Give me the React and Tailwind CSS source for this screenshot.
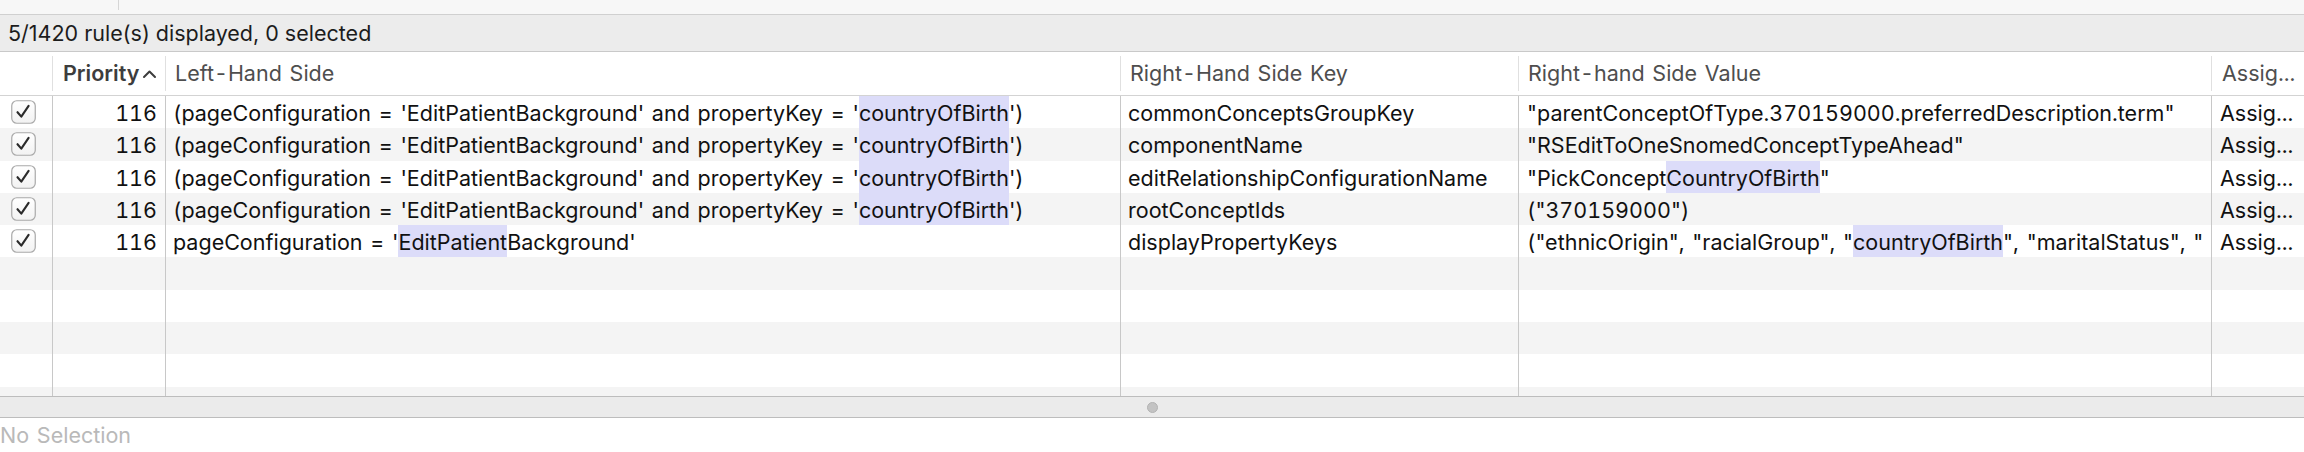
import React from "react";

const font = { fontFamily: 'Inter, "Liberation Sans", Arial, sans-serif' };

// column widths, left to right
const cols = ["w-[53px]", "w-[113px]", "w-[955px]", "w-[398px]", "w-[693px]", "flex-1"];

const lhs = ["(pageConfiguration = 'EditPatientBackground' and propertyKey = '", { h: "countryOfBirth" }, "')"];

const rows = [
  {
    lhs,
    key: "commonConceptsGroupKey",
    value: ['"parentConceptOfType.370159000.preferredDescription.term"'],
  },
  { lhs, key: "componentName", value: ['"RSEditToOneSnomedConceptTypeAhead"'] },
  {
    lhs,
    key: "editRelationshipConfigurationName",
    value: ['"PickConcept', { h: "CountryOfBirth" }, '"'],
  },
  { lhs, key: "rootConceptIds", value: ['("370159000")'] },
  {
    lhs: ["pageConfiguration = '", { h: "EditPatient" }, "Background'"],
    key: "displayPropertyKeys",
    value: ['("ethnicOrigin", "racialGroup", "', { h: "countryOfBirth" }, '", "maritalStatus", "'],
  },
];

function Segments({ parts }) {
  return parts.map((p, i) =>
    typeof p === "string" ? (
      <span key={i}>{p}</span>
    ) : (
      <span key={i} className="bg-[#dcdcf9] py-[3px]">
        {p.h}
      </span>
    )
  );
}

function Check() {
  return (
    <svg width="25" height="24" viewBox="0 0 25 24">
      <defs>
        <linearGradient id="cb" x1="0" y1="0" x2="0" y2="1">
          <stop offset="0" stopColor="#ffffff" />
          <stop offset="1" stopColor="#f2f2f2" />
        </linearGradient>
      </defs>
      <rect x="0.75" y="0.75" width="23.5" height="22.5" rx="5" fill="url(#cb)" stroke="#a9a9a9" strokeWidth="1.2" />
      <path d="M6.5 12.2 L10.3 16.6 L17.6 5.8" fill="none" stroke="#2b2b2b" strokeWidth="2.1" strokeLinecap="round" strokeLinejoin="round" />
    </svg>
  );
}

function Cell({ i, className = "", children }) {
  const last = i === cols.length - 1;
  return (
    <div
      className={`${cols[i]} shrink-0 h-full flex items-center overflow-hidden whitespace-nowrap ${
        last ? "" : "border-r border-[#c8c8c8]"
      } ${className}`}
    >
      {children}
    </div>
  );
}

function HeadCell({ i, className = "", children }) {
  const last = i === cols.length - 1;
  return (
    <div className={`${cols[i]} shrink-0 h-full flex items-center py-[4px] ${className}`}>
      <div className="flex-1 h-full flex items-center overflow-hidden whitespace-nowrap">{children}</div>
      {!last && <div className="w-px h-[35px] bg-[#e0e0e0]" />}
    </div>
  );
}

export default function App() {
  const filler = Array.from({ length: 6 });
  return (
    <div
      className="w-[2304px] h-[452px] flex flex-col bg-white text-[21.5px] text-[#111] tabular-nums [word-spacing:2px] overflow-hidden"
      style={font}
    >
      {/* leftover of the toolbar above */}
      <div className="h-[15px] shrink-0 bg-[#f7f7f7] border-b border-[#d0d0d0] flex">
        <div className="w-[119px] h-[10px] border-r border-[#d6d6d6]" />
      </div>

      {/* status bar */}
      <div className="h-[37px] shrink-0 bg-[#ececec] border-b border-[#c9c9c9] flex items-center pl-[8px] text-[#1c1c1c] normal-nums [word-spacing:0px]">
        5/1420 rule(s) displayed, 0 selected
      </div>

      {/* column headers */}
      <div className="h-[44px] shrink-0 border-b border-[#d3d3d3] flex text-[#4e4e4e]">
        <HeadCell i={0} />
        <HeadCell i={1}>
          <div className="pl-[10px] flex items-center gap-[3px] font-semibold text-[#3d3d3d]">
            <span>Priority</span>
            <svg width="15" height="10" viewBox="0 0 15 10">
              <path d="M2 8 L7.5 2.5 L13 8" fill="none" stroke="#3d3d3d" strokeWidth="2" strokeLinecap="round" strokeLinejoin="round" />
            </svg>
          </div>
        </HeadCell>
        <HeadCell i={2}>
          <span className="pl-[9px]">Left-Hand Side</span>
        </HeadCell>
        <HeadCell i={3}>
          <span className="pl-[9px]">Right-Hand Side Key</span>
        </HeadCell>
        <HeadCell i={4}>
          <span className="pl-[9px]">Right-hand Side Value</span>
        </HeadCell>
        <HeadCell i={5}>
          <span className="pl-[10px]">Assig...</span>
        </HeadCell>
      </div>

      {/* rows */}
      <div className="flex-1 min-h-0 overflow-hidden flex flex-col">
        {rows.map((r, n) => (
          <div key={n} className={`h-[32.3px] shrink-0 flex ${n % 2 ? "bg-[#f4f4f4]" : "bg-white"}`}>
            <Cell i={0} className="pl-[11px]">
              <Check />
            </Cell>
            <Cell i={1} className="justify-end pr-[8px] pt-[2px]">
              116
            </Cell>
            <Cell i={2} className="pl-[7px] pt-[2px]">
              <Segments parts={r.lhs} />
            </Cell>
            <Cell i={3} className="pl-[7px] pt-[2px]">
              {r.key}
            </Cell>
            <Cell i={4} className="pl-[8px] pt-[2px]">
              <Segments parts={r.value} />
            </Cell>
            <Cell i={5} className="pl-[8px] pt-[2px]">
              Assig...
            </Cell>
          </div>
        ))}
        {filler.map((_, n) => (
          <div key={n} className={`h-[32.3px] shrink-0 flex ${(n + 5) % 2 ? "bg-[#f4f4f4]" : "bg-white"}`}>
            {cols.map((_, i) => (
              <Cell key={i} i={i} />
            ))}
          </div>
        ))}
      </div>

      {/* split view divider */}
      <div className="h-[22px] shrink-0 bg-[#ebebeb] border-y border-[#bdbdbd] flex items-center">
        <div className="ml-[1147px] w-[11px] h-[11px] rounded-full bg-[#c3c3c3] border border-[#b3b3b3]" />
      </div>

      <div className="h-[34px] shrink-0 flex items-center text-[#b9b9b9]">No Selection</div>
    </div>
  );
}
